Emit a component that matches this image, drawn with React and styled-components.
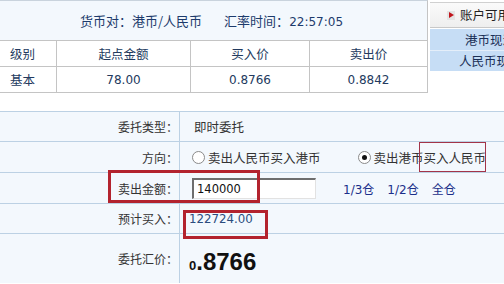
import React from 'react'
import styled, { createGlobalStyle } from 'styled-components'

const GlobalStyle = createGlobalStyle`
  body {
    margin: 0;
    background: #fff;
    font-family: "Noto Sans CJK SC", sans-serif;
    font-size: 12px;
    color: #333;
    overflow: hidden;
  }
`

const Page = styled.div`
  width: 504px;
  height: 284px;
  overflow: hidden;
  position: relative;
`

const TopArea = styled.div`
  display: flex;
  align-items: flex-start;
`

const RatePanel = styled.div`
  width: 427px;
  flex: none;
  border-top: 1px solid #c9d3dd;
  border-right: 1px solid #c4c4c4;
`

const RateHeader = styled.div`
  height: 39px;
  display: flex;
  align-items: center;
  gap: 22px;
  padding-left: 80px;
  background: #f3f8fd;
  border-bottom: 1px solid #c4c4c4;
  color: #1d3b6c;
  font-size: 13px;
`

const Num = styled.span`
  font-family: "DejaVu Sans", sans-serif;
  font-size: 12px;
`

const RateTable = styled.div`
  display: grid;
  grid-template-columns: 56px 134px 119px 118px;
`

const Cell = styled.div`
  height: 25px;
  display: flex;
  align-items: center;
  justify-content: ${p => (p.$left ? 'flex-start' : 'center')};
  padding-left: ${p => (p.$left ? '10px' : '0')};
  border-bottom: 1px solid #c4c4c4;
  border-left: ${p => (p.$first ? 'none' : '1px solid #c4c4c4')};
  color: #233a5e;
  font-size: ${p => (p.$num ? '12px' : '12.5px')};
  font-family: ${p => (p.$num ? '"DejaVu Sans", sans-serif' : 'inherit')};
`

const SidePanel = styled.div`
  flex: 1;
  min-width: 0;
  margin-left: 2px;
  padding-top: 2px;
  white-space: nowrap;
  overflow: hidden;
`

const SideTitle = styled.div`
  height: 24px;
  line-height: 24px;
  padding-left: 17px;
  background: linear-gradient(#fafafa, #eeeeee);
  border-top: 1px solid #d0d0d0;
  border-bottom: 1px solid #c8c8c8;
  color: #222;
  font-size: 12.5px;
`

const ArrowIcon = styled.span`
  display: inline-block;
  vertical-align: middle;
  width: 8px;
  height: 9px;
  margin-right: 5px;
  margin-top: -3px;
  background: #e4e4e4;
  position: relative;
  &::after {
    content: '';
    position: absolute;
    left: 2px;
    top: 1px;
    border-top: 3.5px solid transparent;
    border-bottom: 3.5px solid transparent;
    border-left: 5px solid #c0141c;
  }
`

const SideItem = styled.div`
  height: 20px;
  line-height: 20px;
  padding-left: ${p => p.$indent}px;
  background: #c6ddf5;
  border-top: 1px solid ${p => (p.$sep ? '#e4eef9' : '#c6ddf5')};
  margin-top: ${p => (p.$sep ? '0' : '1px')};
  color: #1a2f55;
  font-size: 12.5px;
`

const Form = styled.div`
  position: relative;
  margin-top: 18px;
  background: #f3f8fd;
  border-top: 1px solid #bcd1e4;
  height: 171px;
`

const Row = styled.div`
  display: grid;
  grid-template-columns: 180px 1fr;
  height: ${p => p.$h || 30}px;
  border-bottom: ${p => (p.$last ? 'none' : '1px solid #bcd1e4')};
`

const Label = styled.div`
  display: flex;
  align-items: center;
  justify-content: flex-end;
  padding-right: 1px;
  border-right: 1px solid #bcd1e4;
  color: #333;
  font-size: 12px;
`

const Value = styled.div`
  display: flex;
  align-items: center;
  padding-left: ${p => p.$pad || 14}px;
  color: #333;
  font-size: 12.5px;
  white-space: nowrap;
`

const RadioOption = styled.label`
  display: flex;
  align-items: center;
  gap: 3px;
  margin-right: ${p => p.$gap || 0}px;
`

const RadioDot = styled.span`
  width: 11px;
  height: 11px;
  border-radius: 50%;
  border: 1px solid #8a8a8a;
  background: #fff;
  display: flex;
  align-items: center;
  justify-content: center;
  &::after {
    content: '';
    width: 5px;
    height: 5px;
    border-radius: 50%;
    background: ${p => (p.$checked ? '#111' : 'transparent')};
  }
`

const AmountInput = styled.div`
  width: 118px;
  height: 18px;
  background: #fff;
  border-top: 2px solid #6e6e6e;
  border-left: 2px solid #6e6e6e;
  border-right: 1px solid #e2e2e2;
  border-bottom: 1px solid #e2e2e2;
  display: flex;
  align-items: center;
  padding-left: 3px;
  font-family: "DejaVu Sans", sans-serif;
  font-size: 11.5px;
  color: #111;
  margin-right: 27px;
`

const QuickLink = styled.span`
  color: #1b2f8a;
  margin-right: 13px;
  font-family: "DejaVu Sans", "Noto Sans CJK SC", sans-serif;
  font-size: 12px;
`

const Estimate = styled.span`
  color: #2b4c7e;
  font-family: "DejaVu Sans", sans-serif;
  font-size: 11.8px;
`

const RateBig = styled.span`
  font-family: "Liberation Sans", Arial, sans-serif;
  font-weight: bold;
  color: #111;
  font-size: 24px;
  margin-top: 6px;
`

const RateSmall = styled.span`
  font-size: 13px;
`

const Mark = styled.div`
  position: absolute;
  left: ${p => p.$x}px;
  top: ${p => p.$y}px;
  width: ${p => p.$w}px;
  height: ${p => p.$h}px;
  box-sizing: border-box;
  border: ${p => (p.$thin ? '1.5px solid #a23449' : '3px solid #b3232e')};
  pointer-events: none;
`

export default function App() {
  return (
    <Page>
      <GlobalStyle />
      <TopArea>
        <RatePanel>
          <RateHeader>
            <span>货币对：港币/人民币</span>
            <span>
              汇率时间：<Num>22:57:05</Num>
            </span>
          </RateHeader>
          <RateTable>
            <Cell $first $left>级别</Cell>
            <Cell>起点金额</Cell>
            <Cell>买入价</Cell>
            <Cell>卖出价</Cell>
            <Cell $first $left>基本</Cell>
            <Cell $num>78.00</Cell>
            <Cell $num>0.8766</Cell>
            <Cell $num>0.8842</Cell>
          </RateTable>
        </RatePanel>
        <SidePanel>
          <SideTitle>
            <ArrowIcon />
            账户可用余额
          </SideTitle>
          <SideItem $indent={35}>港币现汇可用</SideItem>
          <SideItem $indent={29} $sep>人民币现汇可用</SideItem>
        </SidePanel>
      </TopArea>

      <Form>
        <Row $h={29}>
          <Label>委托类型：</Label>
          <Value>即时委托</Value>
        </Row>
        <Row>
          <Label>方向：</Label>
          <Value $pad={12}>
            <RadioOption $gap={37}>
              <RadioDot />
              卖出人民币买入港币
            </RadioOption>
            <RadioOption>
              <RadioDot $checked />
              卖出港币买入人民币
            </RadioOption>
          </Value>
        </Row>
        <Row>
          <Label>卖出金额：</Label>
          <Value $pad={12}>
            <AmountInput>140000</AmountInput>
            <QuickLink>1/3仓</QuickLink>
            <QuickLink>1/2仓</QuickLink>
            <QuickLink>全仓</QuickLink>
          </Value>
        </Row>
        <Row $h={29}>
          <Label>预计买入：</Label>
          <Value $pad={9}>
            <Estimate>122724.00</Estimate>
          </Value>
        </Row>
        <Row $h={49} $last>
          <Label>委托汇价：</Label>
          <Value $pad={9}>
            <RateBig>
              <RateSmall>0</RateSmall>.8766
            </RateBig>
          </Value>
        </Row>

        <Mark $x={108} $y={58} $w={152} $h={33} />
        <Mark $x={183} $y={98} $w={85} $h={29} />
        <Mark $x={419} $y={30} $w={67} $h={30} $thin />
      </Form>
    </Page>
  )
}
